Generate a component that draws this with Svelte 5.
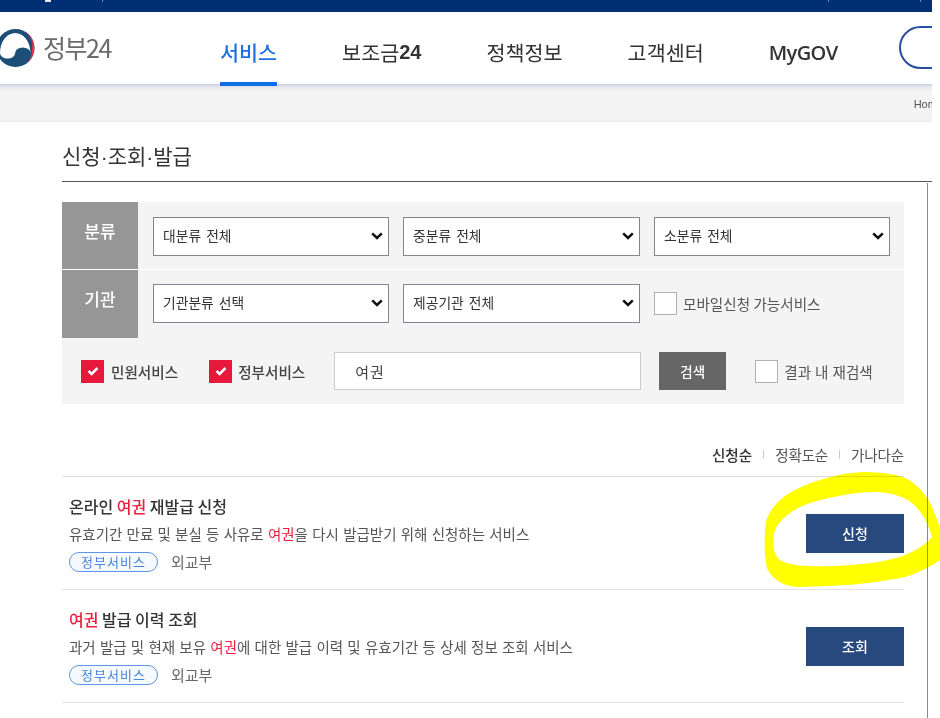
<script>
  const selectsA = [
    { w: 'w1', label: '대분류 전체' },
    { w: 'w2', label: '중분류 전체' },
    { w: 'w3', label: '소분류 전체' }
  ];
  const selectsB = [
    { w: 'w1', label: '기관분류 선택' },
    { w: 'w2', label: '제공기관 전체' }
  ];
  const results = [
    {
      title: ['온라인 ', '여권', ' 재발급 신청'],
      desc: ['유효기간 만료 및 분실 등 사유로 ', '여권', '을 다시 발급받기 위해 신청하는 서비스'],
      action: '신청'
    },
    {
      title: ['', '여권', ' 발급 이력 조회'],
      desc: ['과거 발급 및 현재 보유 ', '여권', '에 대한 발급 이력 및 유효기간 등 상세 정보 조회 서비스'],
      action: '조회'
    }
  ];
</script>

{#snippet chevron()}
  <svg class="chev" width="12" height="8" viewBox="0 0 12 8" aria-hidden="true"><path d="M1.2 1.4 L6 6 L10.8 1.4" fill="none" stroke="#111" stroke-width="2.5" /></svg>
{/snippet}

{#snippet tick()}
  <svg width="12" height="10" viewBox="0 0 12 10" aria-hidden="true"><path d="M1.5 5 L4.6 8 L10.5 2" fill="none" stroke="#fff" stroke-width="2.5" /></svg>
{/snippet}

<div class="canvas">
  <div class="page">
    <div class="topbar">
      <span class="blob"></span>
      <span class="mark-a"></span>
      <span class="mark-b"></span>
      <span class="mark-c"></span>
    </div>
    <header class="header">
      <div class="logo">
        <svg class="mark" width="32" height="40" viewBox="0 0 32 40" aria-hidden="true">
          <circle cx="15.5" cy="20" r="19" fill="#1d4e78" />
          <path d="M21 1.8 A19 19 0 0 1 26 35.8 A18 18 0 0 0 32 21 A17 17 0 0 0 21 1.8Z" fill="#e5354f" />
          <path d="M0 25 A7.6 5.5 0 0 0 15.2 25 A7.6 5.5 0 0 1 30.4 25 A15.2 20 0 0 0 0 25Z" fill="#fff" />
        </svg>
        <span class="logo-text">정부24</span>
      </div>
      <nav class="nav">
        <span class="nav-item active">서비스</span>
        <span class="nav-item">보조금<b>24</b></span>
        <span class="nav-item">정책정보</span>
        <span class="nav-item">고객센터</span>
        <span class="nav-item mygov">MyGOV</span>
      </nav>
      <div class="pill"></div>
    </header>
    <div class="crumbs"><span>Home</span></div>

    <main class="main">
      <h1 class="title">신청<span class="dot">·</span>조회<span class="dot">·</span>발급</h1>

      <section class="filters">
        <div class="row">
          <div class="row-label">분류</div>
          <div class="row-body">
            {#each selectsA as s}
              <span class="sel-wrap {s.w}"><select class="sel"><option>{s.label}</option></select>{@render chevron()}</span>
            {/each}
          </div>
        </div>
        <div class="row two">
          <div class="row-label">기관</div>
          <div class="row-body">
            {#each selectsB as s}
              <span class="sel-wrap {s.w}"><select class="sel"><option>{s.label}</option></select>{@render chevron()}</span>
            {/each}
            <span class="check-item mobile"><span class="box"></span><span>모바일신청 가능서비스</span></span>
          </div>
        </div>
        <div class="search-row">
          <span class="check-item first strong">
            <span class="box on">{@render tick()}</span>
            <span>민원서비스</span>
          </span>
          <span class="check-item second strong">
            <span class="box on">{@render tick()}</span>
            <span>정부서비스</span>
          </span>
          <input class="query" value="여권" />
          <button class="search">검색</button>
          <span class="check-item refine"><span class="box"></span><span>결과 내 재검색</span></span>
        </div>
      </section>

      <div class="sort">
        <span class="current">신청순</span>
        <i></i>
        <span>정확도순</span>
        <i></i>
        <span>가나다순</span>
      </div>

      <ul class="list">
        {#each results as r}
          <li class="item">
            <div class="info">
              <div class="item-title">{r.title[0]}<em>{r.title[1]}</em>{r.title[2]}</div>
              <div class="item-desc">{r.desc[0]}<em>{r.desc[1]}</em>{r.desc[2]}</div>
              <div class="meta"><span class="tag">정부서비스</span><span class="org">외교부</span></div>
            </div>
            <button class="action">{r.action}</button>
          </li>
        {/each}
      </ul>
    </main>
    <div class="edge"></div>
  </div>

  <svg class="scribble" width="940" height="718" viewBox="0 0 940 718" aria-hidden="true">
    <path fill="#ffff00" fill-rule="evenodd" d="M863 472 C880 472 895 474 905 478 C920 485 930 500 934 512 L940 527 L940 560 C930 567 915 575 900 578 C870 584 840 586 800 587 C785 587 772 580 767 568 C764 555 764 535 766 522 C770 508 780 498 795 490 C815 480 840 473 863 472Z M873 492 C855 492 830 497 810 503 C795 508 782 517 776 528 C771 540 772 552 780 560 C788 566 810 567 835 566 C860 565 885 562 903 556 C915 551 925 545 932 537 C928 522 920 508 908 500 C897 494 885 492 873 492Z" />
  </svg>
</div>

<style>
  :global(body) {
    margin: 0;
    background: #fff;
  }

  .canvas {
    position: relative;
    width: 940px;
    height: 718px;
    overflow: hidden;
    font-family: "Noto Sans CJK KR", "Noto Sans", sans-serif;
    color: #333;
  }

  .page {
    position: relative;
    width: 932px;
    height: 718px;
    overflow: hidden;
  }

  .topbar {
    display: flex;
    align-items: flex-start;
    height: 12px;
    background: #012f73;
  }

  .blob {
    width: 6px;
    height: 2px;
    margin-left: 45px;
    background: #e6e9f2;
  }

  .mark-a,
  .mark-b,
  .mark-c {
    width: 1px;
    height: 2px;
    background: #6f8ab8;
  }

  .mark-a {
    margin-left: 51px;
  }

  .mark-b {
    margin-left: 725px;
  }

  .mark-c {
    margin-left: 91px;
  }

  .header {
    display: flex;
    align-items: center;
    height: 72px;
    background: #fff;
  }

  .logo {
    display: flex;
    align-items: center;
    width: 220px;
    flex: none;
    margin-top: -1px;
  }

  .mark {
    flex: none;
    margin-right: 11px;
    overflow: visible;
  }

  .logo-text {
    font-size: 25px;
    line-height: 1;
    color: #6b6b6b;
    letter-spacing: -1.5px;
  }

  .nav {
    display: flex;
    gap: 65px;
    height: 100%;
    flex: none;
  }

  .nav-item {
    position: relative;
    display: flex;
    align-items: center;
    font-size: 20.7px;
    color: #333;
    white-space: nowrap;
    padding-top: 8px;
    box-sizing: border-box;
  }

  .nav-item b {
    font-family: "Liberation Sans", sans-serif;
    font-size: 20px;
    font-weight: 700;
  }

  .nav-item.active {
    color: #1f6fe5;
    font-weight: 500;
  }

  .nav-item.active::after {
    content: "";
    position: absolute;
    left: 0;
    right: 0;
    bottom: -2px;
    height: 4px;
    background: #0f6fe0;
    z-index: 1;
  }

  .mygov {
    font-family: "Open Sans", sans-serif;
    font-weight: 600;
    font-size: 20px;
    letter-spacing: -0.6px;
  }

  .pill {
    flex: none;
    width: 60px;
    height: 43px;
    margin-left: 61px;
    box-sizing: border-box;
    border: 2px solid #2a4fa0;
    border-radius: 22px;
    margin-top: -1px;
  }

  .crumbs {
    height: 38px;
    box-sizing: border-box;
    background: linear-gradient(to bottom, #c8d0de 0, #e6e7ec 3px, #f4f3f4 7px);
    border-bottom: 1px solid #eceaea;
    display: flex;
    justify-content: flex-end;
    align-items: center;
    padding-top: 2px;
    overflow: hidden;
  }

  .crumbs span {
    font-family: "Liberation Sans", sans-serif;
    font-size: 11px;
    color: #555;
    margin-right: -11px;
  }

  .main {
    padding-left: 62px;
  }

  .title {
    margin: 0;
    height: 60px;
    box-sizing: border-box;
    padding-top: 18px;
    font-size: 21px;
    line-height: 30px;
    font-weight: 400;
    color: #333;
    border-bottom: 1.5px solid #555;
  }

  .dot {
    font-family: "Liberation Sans", sans-serif;
  }

  .filters {
    width: 842px;
    margin-top: 20px;
    background: #f4f4f4;
  }

  .row {
    display: flex;
    height: 68px;
    box-sizing: border-box;
    border-bottom: 1.5px solid #fff;
  }

  .row.two {
    border-bottom: 0;
  }

  .row-label {
    flex: none;
    width: 76px;
    box-sizing: border-box;
    padding-top: 15px;
    background: #969696;
    color: #fff;
    font-size: 17px;
    line-height: 28px;
    font-weight: 500;
    text-align: center;
  }

  .row-body {
    display: flex;
    align-items: flex-start;
    gap: 14px;
    padding: 15px 0 0 15px;
  }

  .two .row-body {
    padding-top: 14px;
  }

  .sel-wrap {
    position: relative;
    display: block;
    flex: none;
    height: 39px;
  }

  .sel {
    display: block;
    width: 100%;
    height: 39px;
    box-sizing: border-box;
    border: 1.5px solid #85858e;
    border-radius: 0;
    background-color: #fff;
    appearance: none;
    font-family: inherit;
    font-size: 13.8px;
    word-spacing: 2px;
    color: #333;
    padding: 0 0 4px 9px;
  }

  .chev {
    position: absolute;
    right: 6px;
    top: 15px;
    pointer-events: none;
  }

  .w1 {
    width: 236px;
  }

  .w2 {
    width: 237px;
  }

  .w3 {
    width: 236px;
  }

  .check-item {
    display: flex;
    align-items: center;
    gap: 6px;
    font-size: 14.6px;
    color: #555;
    white-space: nowrap;
  }

  .strong {
    color: #444;
    font-weight: 500;
  }

  .mobile {
    margin-top: 8px;
  }

  .box {
    display: flex;
    align-items: center;
    justify-content: center;
    flex: none;
    width: 23px;
    height: 23px;
    box-sizing: border-box;
    border: 1.5px solid #b0b0b0;
    background: #fff;
  }

  .box.on {
    border: 0;
    background: #e8183c;
  }

  .search-row {
    display: flex;
    align-items: center;
    height: 66px;
    padding-left: 19px;
  }

  .first {
    gap: 7px;
  }

  .second {
    margin-left: 31px;
  }

  .query {
    width: 307px;
    height: 38px;
    box-sizing: border-box;
    margin-left: 29px;
    padding: 0 20px;
    border: 1px solid #ccc;
    background: #fff;
    font-family: inherit;
    font-size: 15px;
    letter-spacing: 1px;
    color: #444;
    outline: none;
  }

  .search {
    width: 67px;
    height: 38px;
    margin-left: 18px;
    padding: 0;
    border: 0;
    background: #666;
    color: #fff;
    font-family: inherit;
    font-size: 13.5px;
    font-weight: 500;
  }

  .refine {
    margin-left: 29px;
    word-spacing: 0.7px;
  }

  .sort {
    display: flex;
    justify-content: flex-end;
    align-items: center;
    width: 842px;
    height: 22px;
    margin-top: 39px;
    font-size: 14.6px;
    color: #555;
    letter-spacing: -0.2px;
  }

  .sort .current {
    color: #333;
    font-weight: 500;
    letter-spacing: 0;
  }

  .sort i {
    width: 1px;
    height: 9px;
    margin: 0 11px;
    background: #ccc;
  }

  .list {
    list-style: none;
    width: 842px;
    margin: 11px 0 0;
    padding: 0;
    border-top: 1.5px solid #ddd;
  }

  .item {
    display: flex;
    align-items: center;
    justify-content: space-between;
    height: 112px;
    border-bottom: 1.5px solid #e2e2e2;
  }

  .info {
    padding-left: 7px;
  }

  .item-title {
    font-size: 16px;
    line-height: 24px;
    font-weight: 500;
    color: #333;
  }

  em {
    font-style: normal;
    color: #ee1c3c;
  }

  .item-desc {
    margin-top: 6px;
    font-size: 14.5px;
    line-height: 20px;
    word-spacing: 1px;
    color: #555;
  }

  .meta {
    display: flex;
    align-items: center;
    margin-top: 8px;
  }

  .tag {
    display: block;
    width: 89px;
    height: 20px;
    box-sizing: border-box;
    border: 1.5px solid #5c94e6;
    border-radius: 11px;
    background: #f6faff;
    color: #4a84dc;
    font-size: 13px;
    line-height: 17px;
    text-align: center;
    letter-spacing: 1px;
  }

  .org {
    margin-left: 13px;
    font-size: 15px;
    line-height: 20px;
    color: #666;
  }

  .action {
    width: 98px;
    height: 39px;
    padding: 0;
    border: 0;
    background: #27497d;
    color: #fff;
    font-family: inherit;
    font-size: 14px;
    font-weight: 500;
  }

  .edge {
    position: absolute;
    left: 927px;
    top: 183px;
    bottom: 0;
    width: 1px;
    z-index: 2;
    background: #8a8a8a;
  }

  .scribble {
    position: absolute;
    left: 0;
    top: 0;
    pointer-events: none;
    mix-blend-mode: multiply;
  }
</style>
